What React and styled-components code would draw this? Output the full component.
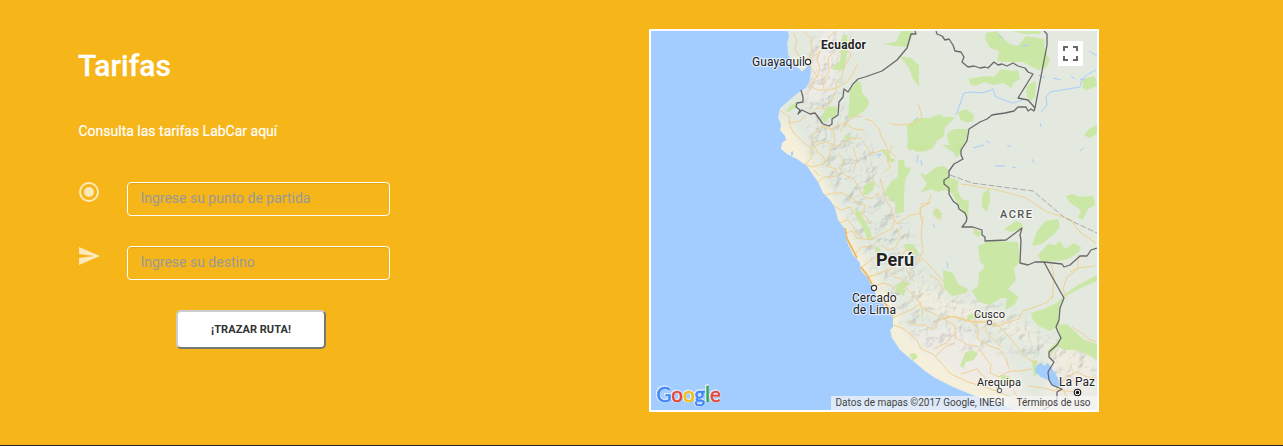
import React from "react";
import styled, { createGlobalStyle } from "styled-components";

const GlobalStyle = createGlobalStyle`
  * { box-sizing: border-box; }
  body { margin: 0; overflow: hidden; background: #f6b519; font-family: Roboto, sans-serif; }
`;

const Section = styled.section`
  display: grid;
  grid-template-columns: 570px 450px;
  align-items: start;
  height: 446px;
  padding: 29px 0 0 79px;
  background: #f6b519;
  border-bottom: 1px solid #222;
`;

const Panel = styled.div`
  width: 311px;
  color: #fff;
`;

const Title = styled.h2`
  margin: 20px 0 0 -1px;
  font-size: 30px;
  line-height: 33px;
  font-weight: 500;
  -webkit-text-stroke: 0.3px #fff;
`;

const Lead = styled.p`
  margin: 39px 0 0 -0.5px;
  font-size: 14px;
  line-height: 20px;
  -webkit-text-stroke: 0.2px #fff;
`;

const Field = styled.label`
  display: grid;
  grid-template-columns: 48px 263px;
  align-items: start;
  height: 34px;
  margin-top: ${(p) => p.$gap}px;
`;

const FieldIcon = styled.svg`
  display: block;
  width: 24px;
  height: 24px;
  margin: -2px 0 0 -2px;
  fill: rgba(255, 255, 255, 0.7);
`;

const Input = styled.input`
  width: 263px;
  height: 34px;
  padding: 5px 12px 7px 12.4px;
  border: 1px solid #fff;
  border-radius: 4px;
  outline: 0;
  background: transparent;
  box-shadow: inset 0 1px 1px rgba(0, 0, 0, 0.075);
  color: #fff;
  font: 14px/20px Roboto, sans-serif;
  &::placeholder { color: #999; opacity: 1; }
`;

const Submit = styled.button`
  display: block;
  width: 150px;
  height: 39px;
  margin: 30px 0 0 97px;
  padding: 0;
  border: 2px solid;
  border-color: #ccc #777 #777 #ccc;
  border-radius: 5px;
  background: #fff;
  color: #333;
  font: 700 11px/16px Roboto, sans-serif;
  letter-spacing: 0.05px;
`;

const MapFrame = styled.div`
  position: relative;
  width: 450px;
  height: 383px;
  border: 2px solid #fff;
  overflow: hidden;
  background: #a3ccff;
`;

const MapArt = styled.svg`
  display: block;
  width: 446px;
  height: 379px;
`;

const Fullscreen = styled.button`
  position: absolute;
  top: 10px;
  right: 14px;
  display: grid;
  place-items: center;
  width: 25px;
  height: 25px;
  padding: 0;
  border: 0;
  background: #fff;
`;

const Attribution = styled.div`
  position: absolute;
  right: 0;
  bottom: 0;
  display: flex;
  justify-content: space-between;
  width: 266px;
  height: 14px;
  padding: 0 6.5px 0 4.5px;
  background: rgba(245, 245, 245, 0.72);
  color: #444;
  font-size: 10px;
  line-height: 14px;
  white-space: nowrap;
`;

const Place = styled.text`
  font-family: Roboto, sans-serif;
  font-size: ${(p) => p.$size || 11}px;
  font-weight: ${(p) => p.$weight || 400};
  fill: ${(p) => p.$color || "#222"};
  stroke: rgba(255, 255, 255, 0.6);
  stroke-width: 2.5px;
  stroke-linejoin: round;
  paint-order: stroke;
`;

const Brand = styled.text`
  font-family: Lato, sans-serif;
  font-size: 20.5px;
  font-weight: 400;
  filter: drop-shadow(0.8px 0 0.3px #d8e9ff) drop-shadow(-0.8px 0 0.3px #d8e9ff)
    drop-shadow(0 0.8px 0.3px #d8e9ff) drop-shadow(0 -0.8px 0.3px #d8e9ff);
  tspan { stroke-width: 0.5px; }
`;

const Letter = styled.tspan`
  fill: ${(p) => p.$color};
  stroke: ${(p) => p.$color};
`;

const LAND =
  "M787 31 789 35 787 43 788 55 792 63 798 68 802 72 806 68 810 65 811 72 809 82 806 88 802 90 795 95 788 101 780 108 778 117 781 125 780 130 785 136 786 140 782 143 781 149 787 154 797 159 807 166 813 175 818 182 823 193 830 200 835 208 838 220 844 228 847 242 853 255 860 263 861 271 867 277 872 287 878 298 888 310 893 318 893 327 890 330 892 338 900 350 912 360 925 371 935 378 955 388 975 396 998 403 1014 410H1097V31Z";

const PARKS = [
  "M842 36 847 34 848 48 846 60 844 70 833 70 834 65 840 61 841 50Z",
  "M850 89 858 81 861 84 862 93 868 99 869 104 865 110 855 117 848 118 849 104Z",
  "M786 111 790 106 796 102 798 107 793 109 789 112Z",
  "M826 108 833 106 837 108 836 115 832 119 829 117 826 123 821 119 824 112Z",
  "M844 136 849 135 851 139 845 140Z",
  "M883 44 896 42 901 31 914 31 908 47 895 46Z",
  "M900 56 911 58 919 65 919 86 913 79 909 68Z",
  "M986 33 997 31 1003 38 1010 44 1018 46 1026 36 1044 39 1045 51 1050 60 1046 68 1038 70 1030 66 1023 62 1003 62 997 61 999 51 990 48 985 39Z",
  "M1012 31 1041 31 1040 34 1024 34Z",
  "M969 79 985 76 994 77 1001 69 1013 71 1018 70 1020 79 1013 83 1012 88 1003 83 993 85 984 82 976 86 970 84Z",
  "M1026 87 1031 83 1036 81 1035 97 1031 101 1027 97Z",
  "M1083 79 1094 76 1096 79 1097 86 1087 90 1082 88Z",
  "M1084 135 1089 129 1097 125V134L1089 138Z",
  "M907 126 916 118 930 118 939 114 944 117 955 117 949 124 945 127 944 136 937 141 932 149 920 150 908 145Z",
  "M958 112 966 109 974 115 973 121 966 123 960 119Z",
  "M947 134 954 129 968 129 966 142 961 149 958 153 948 142Z",
  "M906 145 920 145 921 150 909 150Z",
  "M898 160 904 160 905 167 911 168 905 180 904 196 904 212 896 214 895 203 884 193 891 182 898 176Z",
  "M881 149 887 150 891 158 896 160 892 163 885 156Z",
  "M864 186 870 181 875 184 873 190 867 195 863 194Z",
  "M855 208 861 213 865 221 871 232 872 240 868 240 863 228 856 216Z",
  "M875 247 880 248 881 252 876 253Z",
  "M905 244 913 244 918 252 917 255 910 252 904 248Z",
  "M915 145H935L927 151 915 152Z",
  "M942 145H962L963 150 956 158 954 153Z",
  "M920 173 926 175 936 167 944 166 949 170 948 177 959 181 957 190 962 199 969 201 968 217 963 212 958 204 952 193 945 190 938 192 931 189 920 193 927 184Z",
  "M934 209 939 209 942 214 939 220 933 215Z",
  "M983 193 989 189 990 200 987 212 982 207 982 197Z",
  "M973 228 981 232 979 237 974 234Z",
  "M1004 229 1016 221 1023 224 1021 230 1010 232Z",
  "M1032 245 1037 231 1045 221 1058 219 1060 227 1053 235 1042 244 1034 246Z",
  "M1066 196 1073 194 1079 197 1093 196 1095 205 1088 209 1083 220 1078 218 1081 210 1070 203Z",
  "M1038 255 1048 244 1055 245 1060 241 1065 249 1074 243 1081 247 1079 252 1068 259 1059 261 1041 262Z",
  "M978 246 989 241 1018 242 1020 262 1014 268 1016 280 1010 287 1008 289 1019 297 1014 305 1005 310 1007 298 1001 298 990 305 979 302 972 291 978 286 979 273 985 267 980 261Z",
  "M943 270 953 273 958 284 968 289 966 293 952 296 944 288Z",
  "M898 284 902 281 905 286 904 296 899 293 896 289Z",
  "M903 282 909 282 910 285 904 286Z",
  "M960 366 965 353 972 350 978 353 974 360 966 362 963 368Z",
  "M1031 313 1044 309 1060 301 1058 319 1060 325 1067 324 1084 340 1097 344V360L1083 352 1073 350 1064 350 1057 346 1051 356 1048 350 1060 339 1058 326 1050 331 1037 325 1032 318Z",
  "M1065 294 1078 285 1097 275V281L1081 288 1064 297 1060 305 1058 302Z",
  "M909 354 915 353 918 357 913 361Z",
  "M967 316 973 313 975 318 968 321Z",
  "M1032 361 1037 360 1037 374 1034 377Z",
  "M1000 375 1009 376 1013 382 1002 382Z",
];

const ROADS = [
  "M793 33 797 40 795 50 803 61 813 57 824 48 829 37 836 31",
  "M803 31 811 38 812 48 809 61 812 70 817 76 810 86 817 90 827 90 836 88 847 82 852 75 858 63",
  "M851 37 846 49 851 55 844 67 842 77 836 82 836 91 831 102 825 109 817 108 810 115",
  "M820 52 817 60 820 69 817 78 M835 51 828 58 829 72 823 79 824 89",
  "M781 111 790 117 789 123 800 121 806 115",
  "M789 123 793 132 801 140 811 149 812 158 805 164 812 167 823 164 830 157 830 147 835 141 833 131 827 125",
  "M812 149 818 144 827 142 838 147 850 139 862 138",
  "M820 129 811 137 814 145 818 153 823 156 827 166 836 169 837 176 824 177 818 182",
  "M814 170 819 176 M838 153 844 161 840 169 846 176 854 179 859 189 864 197 871 199 880 193",
  "M853 147 857 160 854 169 M887 163 889 153 885 143 881 136 879 129 872 121 865 119",
  "M864 130 854 129 844 123 831 129 820 126",
  "M840 132 846 122 853 117 862 116",
  "M888 158 890 167 883 173 M880 178 883 189 885 199 891 208 893 218 897 224",
  "M825 195 834 193 842 193 854 199 859 204 866 205 862 213 868 219 870 224",
  "M833 205 841 210 850 207 855 214 862 221",
  "M839 223 848 220 854 228 858 235 M846 233 852 231 857 238 870 240 883 233 892 229 895 219",
  "M854 255 862 247 873 246 877 241 M862 267 870 261 879 253 M881 245 888 250 895 248 901 238 896 228",
  "M868 277 877 274 888 270 896 266 902 256 905 250 917 250",
  "M896 224 910 215 919 214 923 205 M923 216 921 236 923 252 916 262 909 269",
  "M888 270 894 277 902 279 907 289 915 297 922 307 922 317 M872 287 883 283 892 286 897 292",
  "M915 262 922 258 928 264 936 273 944 282 M921 220 920 208 930 203",
  "M914 282 910 275 906 269 M893 318 901 314 913 309 922 302",
  "M893 325 902 328 909 333 917 340 921 349 933 354 942 364 951 374 968 382 981 386 999 392 1025 403 1045 407",
  "M908 321 916 325 925 325 933 330 938 321 950 316 963 320 977 323 987 321 1000 327 1010 338 1018 348 1028 359 1042 365 1054 379 1057 390 1076 392",
  "M922 307 932 313 944 319 955 326 956 338 968 345 977 346 985 357 991 365 990 373 999 377 1010 371 1019 371 1032 369",
  "M944 319 954 316 970 321 985 322 997 326 1008 322 1019 319 1023 311 1035 307 1048 302 1052 296",
  "M968 319 979 329 977 338 989 346 999 349 1006 358 1009 369",
  "M985 325 986 332 993 339 1001 347 M933 349 946 343 956 332",
  "M930 275 938 280 944 291 M936 356 945 347 955 343 M961 374 977 369 982 375 989 381 1000 390",
  "M965 184 978 187 998 190 1026 198 1047 212 1070 219 1080 232 1096 243 M1070 272 1077 268 1095 266",
  "M1078 255 1078 269 1067 277 1063 289 1067 298",
  "M1051 264 1054 276 1053 290 1052 300",
  "M918 103 921 113 922 120 910 124 897 125 889 123 M961 184 966 185",
  "M865 144 869 150 870 154 884 150 M892 145 890 152 896 157 M871 178 878 187",
  "M1072 327 1083 334 1090 340 1097 342 M1061 384 1067 377 1077 372 1087 377 1097 378",
  "M1063 389 1068 400 1078 410 M1028 386 1043 388 1056 391 M1013 390 1019 399 1034 403",
  "M853 259 864 275 M920 204 929 203 931 194 M942 220 936 208",
];

const RIVERS = [
  "M956 115 960 104 964 93 973 92 981 93 989 91 993 89 995 96 1001 99 1013 103 1023 100",
  "M1041 112 1047 105 1046 97 1050 92 1062 90 1080 87 1082 79 1088 74 1096 70",
  "M1038 75 1045 78M1053 78 1061 80M1071 76 1075 79M1080 79 1085 80M1070 44 1083 47M1089 51 1097 56",
  "M998 35 1003 38M1022 46 1029 45M973 148 984 145M995 166 1005 166M1012 167 1016 168",
  "M1032 159 1034 163M1080 151 1084 148M986 141 990 143M1007 146 1011 146M1040 123 1041 127",
  "M876 155 881 154 878 158M918 155 917 163M921 160 922 166M914 121 918 117M947 262 948 268M933 224 935 228",
];

const BORDERS = [
  "M915 31 916 34 911 34 907 48 897 60 882 71 865 77 858 79 853 84 848 92 844 89 843 97 839 102 838 115 832 119 832 124 829 126 823 124 818 117 815 113 810 114 802 110 798 114 800 110 796 107 797 103 803 102 803 97 801 90",
  "M936 31 937 34 942 36 945 40 949 39 953 45 955 51 961 52 964 57 962 62 968 67 974 66 980 68 985 67 988 68 994 62 998 65 1002 64 1007 66 1013 63 1018 66 1025 68 1028 72 1033 74 1018 98 1028 100 1035 108",
  "M1044 31 1047 34 1047 45 1035 108 1034 111 1031 109 1028 111 1026 107 1018 107 1014 111 1005 113 998 114 992 115 987 119 980 122 969 129 967 141 961 150 961 155 963 159 954 164 949 171 949 177 944 180 944 184 949 188 949 194 953 201 958 205 959 209 965 213 967 218 966 222 962 227 973 227 982 230 982 235 985 237 985 241 1006 240 1022 228 1020 235 1021 240 1020 263 1028 265 1035 262 1044 262 1062 264 1064 267 1070 265 1080 256 1087 256 1091 250 1097 248",
  "M1044 262 1051 275 1064 298 1060 308 1059 320 1056 327 1058 332 1061 338 1057 345 1049 352 1049 357 1054 362 1048 372 1049 380 1052 385 1062 389 1057 392 1057 399 1055 403 1043 410",
];

function LocationIcon() {
  return (
    <FieldIcon viewBox="0 0 24 24">
      <path d="M12 7a5 5 0 1 0 0 10 5 5 0 0 0 0-10Zm0-5a10 10 0 1 0 0 20 10 10 0 0 0 0-20Zm0 18a8 8 0 1 1 0-16 8 8 0 0 1 0 16Z" />
    </FieldIcon>
  );
}

function SendIcon() {
  return (
    <FieldIcon viewBox="0 0 24 24">
      <path d="M2.01 21 23 12 2.01 3 2 10l15 2-15 2Z" />
    </FieldIcon>
  );
}

function PeruMap() {
  return (
    <MapArt viewBox="651 31 446 379">
      <defs>
        <clipPath id="land"><path d={LAND} /></clipPath>
        <filter id="soft" x="-20%" y="-20%" width="140%" height="140%">
          <feGaussianBlur stdDeviation="5" />
        </filter>
        <filter id="relief" x="0" y="0" width="100%" height="100%" colorInterpolationFilters="sRGB">
          <feTurbulence type="fractalNoise" baseFrequency="0.085" numOctaves="4" seed="8" />
          <feColorMatrix values="0 0 0 0 0 0 0 0 0 0 0 0 0 0 0 1 0 0 0 0" />
          <feDiffuseLighting surfaceScale="4" lightingColor="#fff" diffuseConstant="1.2">
            <feDistantLight azimuth="225" elevation="60" />
          </feDiffuseLighting>
        </filter>
        <mask id="highlands" maskUnits="userSpaceOnUse" x="651" y="31" width="446" height="379">
          <path filter="url(#soft)" fill="#fff" d="M812 31 848 31 837 100 870 145 902 205 930 285 1000 306 1060 340 1097 350V385H1060L1020 350 960 350 920 345 897 315 870 265 840 195 812 155 806 100Z" />
        </mask>
      </defs>
      <rect x="651" y="31" width="446" height="379" fill="#a3ccff" />
      <g clipPath="url(#land)">
        <path d={LAND} fill="#e3e9df" />
        <path filter="url(#soft)" fill="#eeebe5" d="M820 31H845L834 86 816 106 800 90ZM905 335 950 325 1000 350 1030 395 990 410 920 365ZM1053 345 1097 360V410H1040Z" />
        <path filter="url(#soft)" fill="#f6f0da" d="M777 114 796 135 811 158 830 190 850 235 878 280 898 315 910 341 956 375 1005 395 1000 410 910 370 875 310 840 240 810 180 770 155Z" />
        <path filter="url(#soft)" fill="#f0eddf" d="M917 283 950 301 1010 317 1049 345 1080 353 1097 376 1066 373 1045 350 1004 330 945 316 910 306Z" />
        <g mask="url(#highlands)" style={{ mixBlendMode: "multiply" }} opacity=".24">
          <rect x="651" y="31" width="446" height="379" filter="url(#relief)" />
        </g>
        {PARKS.map((d) => <path key={d} d={d} fill="#c9e6a1" fillOpacity=".92" />)}
        <g fill="none" stroke="#a9cffb" strokeWidth="1">
          {RIVERS.map((d) => <path key={d} d={d} />)}
        </g>
        <g fill="none" stroke="#efd194" strokeWidth="1" strokeLinejoin="round">
          {ROADS.map((d) => <path key={d} d={d} />)}
        </g>
        <path d="M845 228 847 239 853 250 857 258M861 267 867 275 872 284M882 300 889 308 893 316" fill="none" stroke="#eeb561" strokeWidth="1.7" />
        <path d="M803 76 808 73 808 78 804 80 801 83 801 78Z" fill="#e3e9df" stroke="#a3ccff" />
        <path d="M1036 366 1041 363 1044 366 1048 363 1053 370 1058 378 1061 387 1053 386 1048 380 1041 377 1035 372Z" fill="#a3ccff" />
        <path d="M791 152 793 151 793 155 791 156Z" fill="#a3ccff" />
      </g>
      <path d="M950 175 972 183 1033 191 1065 218 1097 233" fill="none" stroke="#aaa" strokeDasharray="6 2" />
      <g fill="none" stroke="#686868" strokeWidth="1.3" strokeLinejoin="round">
        {BORDERS.map((d) => <path key={d} d={d} />)}
      </g>
      <Place x="821" y="49" textLength="45" $size={12} $weight={700}>Ecuador</Place>
      <Place x="752" y="66" textLength="53" $size={12}>Guayaquil</Place>
      <Place x="876" y="266" textLength="38" $size={18} $weight={700}>Perú</Place>
      <Place x="852" y="302" textLength="44.5" $size={12}>Cercado</Place>
      <Place x="853" y="314" textLength="43" $size={12}>de Lima</Place>
      <Place x="1000" y="218" textLength="32" $color="#555" $weight={500}>ACRE</Place>
      <Place x="974" y="318" textLength="31">Cusco</Place>
      <Place x="977" y="386" textLength="44">Arequipa</Place>
      <Place x="1059" y="386" textLength="36" $size={12}>La Paz</Place>
      <g fill="#fff" stroke="#333" strokeWidth="1.1">
        <circle cx="808" cy="62" r="2.6" />
        <circle cx="874" cy="288" r="2.6" />
        <circle cx="989.5" cy="322.5" r="2.1" stroke="#666" />
        <circle cx="999.5" cy="390.5" r="2.1" stroke="#666" />
        <circle cx="1077.5" cy="392.5" r="3.2" stroke="#111" />
        <circle cx="1077.5" cy="392.5" r="1.2" fill="#111" stroke="#111" />
      </g>
      <Brand x="656.5" y="402">
        <Letter $color="#4285f4">G</Letter><Letter $color="#ea4335">o</Letter><Letter $color="#fbbc05">o</Letter><Letter $color="#4285f4">g</Letter><Letter $color="#34a853">l</Letter><Letter $color="#ea4335">e</Letter>
      </Brand>
    </MapArt>
  );
}

export default function App() {
  return (
    <>
      <GlobalStyle />
      <Section>
        <Panel>
          <Title>Tarifas</Title>
          <Lead>Consulta las tarifas LabCar aquí</Lead>
          <Field $gap={41}><LocationIcon /><Input placeholder="Ingrese su punto de partida" /></Field>
          <Field $gap={30}><SendIcon /><Input placeholder="Ingrese su destino" /></Field>
          <Submit type="button">¡TRAZAR RUTA!</Submit>
        </Panel>
        <MapFrame>
          <PeruMap />
          <Fullscreen type="button" aria-label="Pantalla completa">
            <svg width="15" height="15" viewBox="0 0 15 15" fill="none" stroke="#666" strokeWidth="2">
              <path d="M1 5V1h4M10 1h4v4M14 10v4h-4M5 14H1v-4" />
            </svg>
          </Fullscreen>
          <Attribution><span>Datos de mapas ©2017 Google, INEGI</span><span>Términos de uso</span></Attribution>
        </MapFrame>
      </Section>
    </>
  );
}
